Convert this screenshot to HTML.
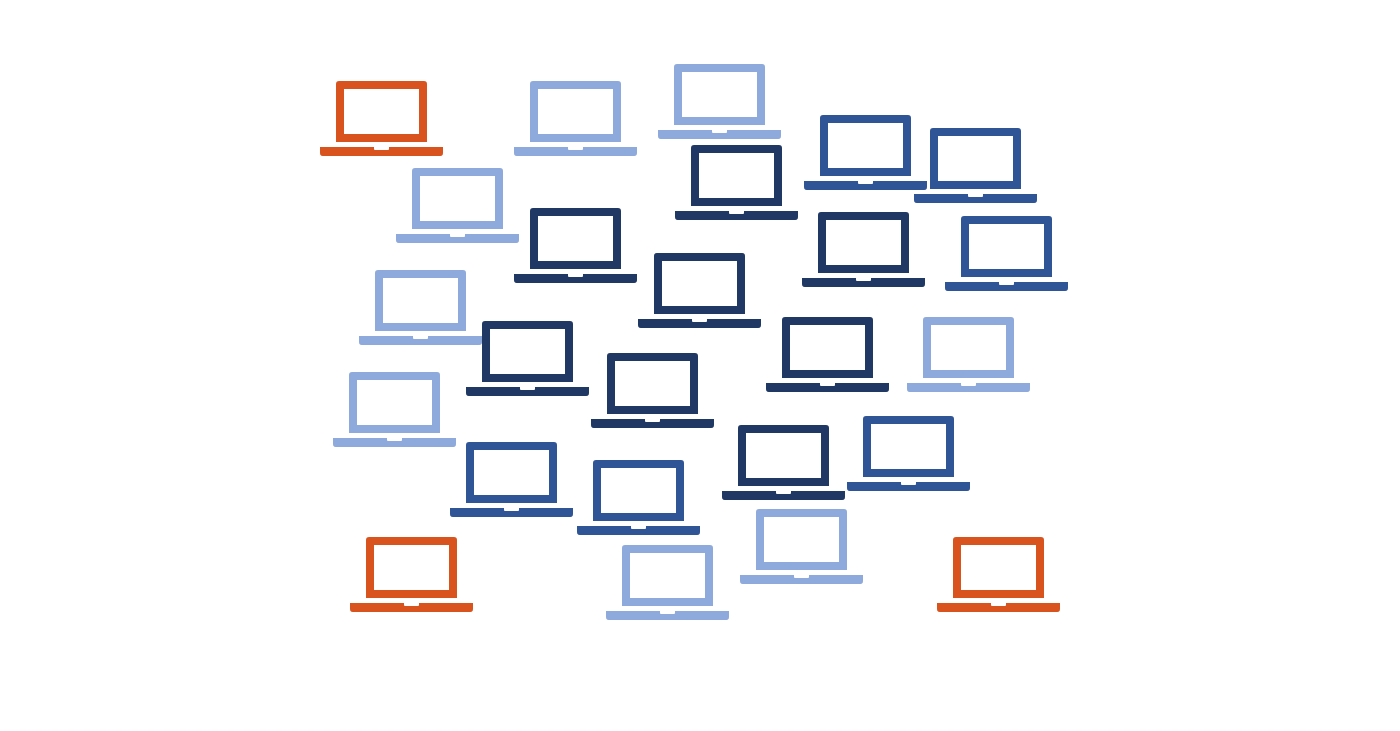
<!DOCTYPE html>
<html><head><style>html,body{margin:0;padding:0;background:#fff;width:1400px;height:731px;overflow:hidden}</style></head>
<body>
<svg width="1400" height="731" viewBox="0 0 1400 731" xmlns="http://www.w3.org/2000/svg">
<defs>
<g id="lp">
<path fill-rule="evenodd" d="M19 0H88Q91 0 91 3V61H0V3Q0 0 3 0H19ZM8 8V53H83V8Z" transform="translate(16,0)"/>
<path d="M0 66H54V68Q54 69 55 69H68Q69 69 69 68V66H123V72Q123 75 120 75H3Q0 75 0 72Z"/>
</g>
</defs>
<g>
<use href="#lp" x="320" y="81" fill="#D9531E"/>
<use href="#lp" x="514" y="81" fill="#8EA9DB"/>
<use href="#lp" x="658" y="64" fill="#8EA9DB"/>
<use href="#lp" x="804" y="115" fill="#2F5597"/>
<use href="#lp" x="914" y="128" fill="#2F5597"/>
<use href="#lp" x="675" y="145" fill="#1F3864"/>
<use href="#lp" x="396" y="168" fill="#8EA9DB"/>
<use href="#lp" x="514" y="208" fill="#1F3864"/>
<use href="#lp" x="802" y="212" fill="#1F3864"/>
<use href="#lp" x="945" y="216" fill="#2F5597"/>
<use href="#lp" x="638" y="253" fill="#1F3864"/>
<use href="#lp" x="359" y="270" fill="#8EA9DB"/>
<use href="#lp" x="466" y="321" fill="#1F3864"/>
<use href="#lp" x="766" y="317" fill="#1F3864"/>
<use href="#lp" x="907" y="317" fill="#8EA9DB"/>
<use href="#lp" x="591" y="353" fill="#1F3864"/>
<use href="#lp" x="333" y="372" fill="#8EA9DB"/>
<use href="#lp" x="450" y="442" fill="#2F5597"/>
<use href="#lp" x="722" y="425" fill="#1F3864"/>
<use href="#lp" x="847" y="416" fill="#2F5597"/>
<use href="#lp" x="577" y="460" fill="#2F5597"/>
<use href="#lp" x="740" y="509" fill="#8EA9DB"/>
<use href="#lp" x="350" y="537" fill="#D9531E"/>
<use href="#lp" x="937" y="537" fill="#D9531E"/>
<use href="#lp" x="606" y="545" fill="#8EA9DB"/>
</g>
</svg>
</body></html>
